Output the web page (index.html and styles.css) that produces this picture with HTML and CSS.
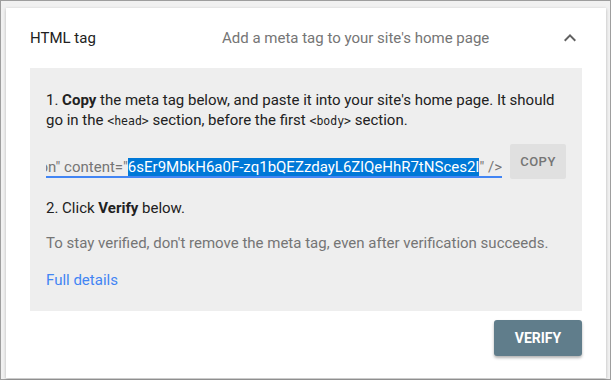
FILE: index.html
```html
<!DOCTYPE html>
<html>
<head>
<meta charset="utf-8">
<link rel="stylesheet" href="styles.css">
</head>
<body>
<div class="frame">
  <div class="card">
    <div class="header">
      <div class="title">HTML tag</div>
      <div class="desc">Add a meta tag to your site's home page</div>
      <svg class="chev" width="24" height="24" viewBox="0 0 24 24"><path d="M7.41 15.41L12 10.83l4.59 4.58L18 14l-6-6-6 6z" fill="#616161"/></svg>
    </div>
    <div class="panel">
      <p class="step1">1. <b>Copy</b> the meta tag below, and paste it into your site's home page. It should go in the <code>&lt;head&gt;</code> section, before the first <code>&lt;body&gt;</code> section.</p>
      <div class="row">
        <div class="field"><span class="val">&lt;meta name="google-site-verification" content="<span class="sel">6sEr9MbkH6a0F-zq1bQEZzdayL6ZlQeHhR7tNSces2I</span>" /&gt;</span></div>
        <button class="copy">COPY</button>
      </div>
      <p class="step2">2. Click <b>Verify</b> below.</p>
      <p class="note">To stay verified, don't remove the meta tag, even after verification succeeds.</p>
      <a class="link">Full details</a>
    </div>
    <div class="actions">
      <button class="verify">VERIFY</button>
    </div>
  </div>
</div>
</body>
</html>
```

FILE: styles.css
```css
html, body {
  margin: 0;
  padding: 0;
}
body {
  width: 611px;
  height: 380px;
  font-family: Roboto, "Noto Sans", sans-serif;
}
.frame {
  box-sizing: border-box;
  width: 611px;
  height: 380px;
  border: 1px solid #9e9e9e;
  background: #f1f1f1;
  padding: 7px 4px 2px 5px;
}
.card {
  box-sizing: border-box;
  width: 600px;
  height: 370px;
  background: #fff;
  box-shadow: 0 1px 3px rgba(0,0,0,0.25);
  padding: 0 24px;
}
.header {
  height: 60px;
  display: flex;
  align-items: center;
}
.title {
  width: 192px;
  font-size: 15px;
  color: #212121;
}
.desc {
  flex: 1;
  font-size: 15px;
  color: #757575;
}
.chev {
  display: block;
}
.panel {
  background: #eeeeee;
  padding: 22px 16px 21px 16px;
}
.panel p {
  margin: 0;
  font-size: 15px;
  line-height: 20px;
  color: #212121;
}
.panel b {
  font-weight: 700;
}
code {
  font-family: "DejaVu Sans Mono", monospace;
  font-size: 11.5px;
  line-height: 12px;
}
.row {
  margin-top: 14px;
  height: 36px;
  display: flex;
  gap: 8px;
}
.field {
  flex: 1;
  display: flex;
  justify-content: flex-end;
  overflow: hidden;
  white-space: nowrap;
  border-bottom: 2px solid #4285f4;
  height: 34px;
  align-items: flex-end;
  box-sizing: border-box;
}
.val {
  flex: none;
  font-size: 15px;
  line-height: 18px;
  color: #757575;
}
.sel {
  background: #0078d7;
  color: #fff;
}
.copy {
  width: 56px;
  height: 35px;
  border: none;
  border-radius: 2px;
  background: #e0e0e0;
  color: #757575;
  font-family: Roboto, sans-serif;
  font-weight: 500;
  font-size: 13px;
  letter-spacing: 0.5px;
  padding: 0;
}
.panel .step2 {
  margin-top: 18px;
}
.panel .note {
  margin-top: 15px;
  color: #757575;
}
.link {
  display: block;
  margin-top: 17px;
  font-size: 15px;
  line-height: 20px;
  color: #4285f4;
}
.actions {
  display: flex;
  justify-content: flex-end;
  margin-top: 9px;
}
.verify {
  width: 88px;
  height: 36px;
  border: none;
  border-radius: 3px;
  background: #607d8b;
  color: #fff;
  font-family: Roboto, sans-serif;
  font-weight: 700;
  font-size: 14px;
  box-shadow: 0 2px 3px rgba(0,0,0,0.3);
  padding: 0;
}
```
